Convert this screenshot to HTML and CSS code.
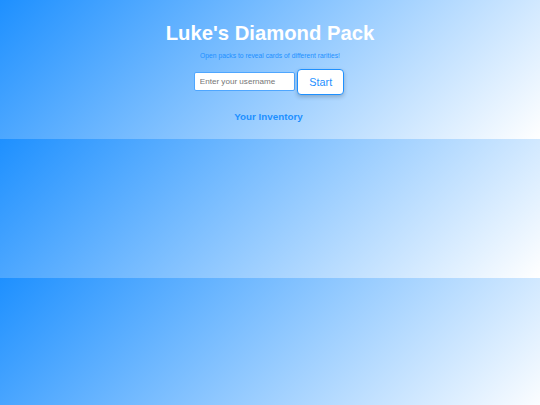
FILE: index.html
```html
<!DOCTYPE html>
<html lang="en">
<head>
<meta charset="utf-8">
<title>Luke's Diamond Pack</title>
<link rel="stylesheet" href="styles.css">
</head>
<body>
<div class="page">
  <h1 class="title">Luke's Diamond Pack</h1>
  <p class="subtitle">Open packs to reveal cards of different rarities!</p>
  <div class="login">
    <input class="username" type="text" placeholder="Enter your username">
    <button class="start">Start</button>
  </div>
  <h2 class="inventory-title">Your Inventory</h2>
</div>
</body>
</html>
```

FILE: styles.css
```css
body {
  margin: 0;
  font-family: "Liberation Sans", Arial, sans-serif;
  background: linear-gradient(135deg, #1e90ff, #ffffff);
}

.page {
  padding: 21.5px 0 17px;
  text-align: center;
}

.title {
  margin: 0;
  font-size: 20.25px;
  font-weight: bold;
  color: #ffffff;
}

.subtitle {
  margin: 7px 0 0;
  font-size: 6.75px;
  color: #1e90ff;
}

.login {
  margin-top: 10px;
  padding-right: 2px;
  display: flex;
  justify-content: center;
  align-items: center;
  gap: 2.5px;
}

.username {
  box-sizing: border-box;
  width: 101px;
  height: 19.5px;
  margin: 0;
  padding: 0 5px;
  font-family: "Liberation Sans", Arial, sans-serif;
  font-size: 8.1px;
  border: 1px solid #4ea6ff;
  border-radius: 2px;
  background: #ffffff;
  outline: none;
}

.username::placeholder {
  color: #757575;
}

.start {
  box-sizing: border-box;
  width: 47px;
  height: 26px;
  margin: 0;
  padding: 0;
  font-family: "Liberation Sans", Arial, sans-serif;
  font-size: 10.8px;
  color: #1e90ff;
  background: #ffffff;
  border: 1px solid #1e90ff;
  border-radius: 4px;
  box-shadow: 0 2px 4px rgba(0, 0, 0, 0.2);
}

.inventory-title {
  margin: 16.4px 0 0;
  padding-right: 3px;
  font-size: 9.8px;
  font-weight: bold;
  color: #1e90ff;
}
```
